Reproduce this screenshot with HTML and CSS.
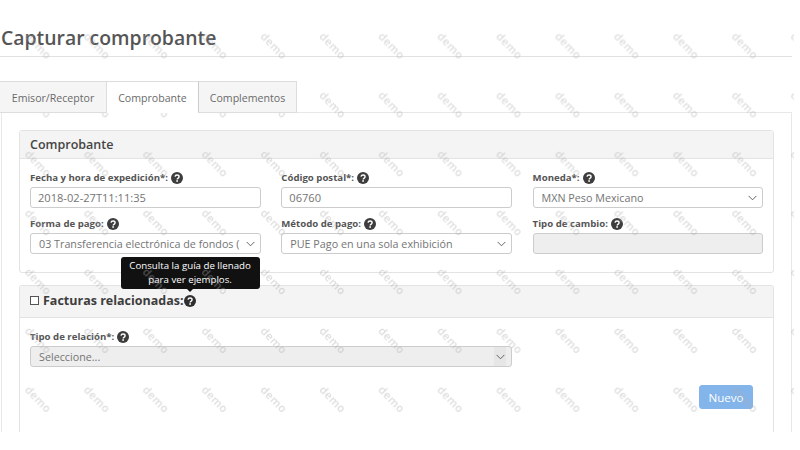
FILE: index.html
```html
<!DOCTYPE html>
<html lang="es">
<head>
<meta charset="utf-8">
<title>Capturar comprobante</title>
<link rel="stylesheet" href="styles.css">
</head>
<body>
<svg width="0" height="0" class="defs">
  <symbol id="q" viewBox="0 0 24 24">
    <circle cx="12" cy="12" r="12"/>
    <path d="M8 9.4C8.3 7.2 10 6 12.1 6c2.300 0 4 1.400 4 3.400 0 1.700-1 2.500-2.200 3.300-.9.600-1.400 1.100-1.400 2.100" fill="none" stroke="#fff" stroke-width="2.800"/>
    <rect x="10.600" y="16.400" width="3.200" height="3.200" fill="#fff"/>
  </symbol>
  <symbol id="chev" viewBox="0 0 10 6">
    <path d="M.7.7 5 5 9.300.7" fill="none" stroke="#555" stroke-width="1"/>
  </symbol>
</svg>
<main class="page">
  <h1 class="title">Capturar comprobante</h1>
  <nav class="tabs">
    <a class="tab tab-a">Emisor/Receptor</a>
    <a class="tab tab-active">Comprobante</a>
    <a class="tab tab-c">Complementos</a>
  </nav>
  <div class="pane">
    <section class="panel panel-one">
      <h2 class="panel-head">Comprobante</h2>
      <div class="grid">
        <div class="field">
          <label class="label">Fecha y hora de expedición*: <svg class="q"><use href="#q"/></svg></label>
          <div class="control num">2018-02-27T11:11:35</div>
        </div>
        <div class="field">
          <label class="label">Código postal*: <svg class="q"><use href="#q"/></svg></label>
          <div class="control num">06760</div>
        </div>
        <div class="field">
          <label class="label">Moneda*: <svg class="q"><use href="#q"/></svg></label>
          <div class="control select"><span class="val">MXN Peso Mexicano</span><svg class="chev"><use href="#chev"/></svg></div>
        </div>
        <div class="field">
          <label class="label">Forma de pago: <svg class="q"><use href="#q"/></svg></label>
          <div class="control select"><span class="val">03 Transferencia electrónica de fondos (</span><svg class="chev"><use href="#chev"/></svg></div>
        </div>
        <div class="field">
          <label class="label">Método de pago: <svg class="q"><use href="#q"/></svg></label>
          <div class="control select"><span class="val">PUE Pago en una sola exhibición</span><svg class="chev"><use href="#chev"/></svg></div>
        </div>
        <div class="field">
          <label class="label">Tipo de cambio: <svg class="q"><use href="#q"/></svg></label>
          <div class="control disabled"></div>
        </div>
      </div>
    </section>
    <section class="panel panel-two">
      <h2 class="panel-head head-check">
        <span class="check"></span>
        <span class="head-text">Facturas relacionadas:</span>
        <span class="tip-anchor">
          <svg class="q q-big"><use href="#q"/></svg>
          <span class="tooltip">Consulta la guía de llenado<br>para ver ejemplos.</span>
        </span>
      </h2>
      <div class="rel">
        <div class="field rel-field">
          <label class="label">Tipo de relación*: <svg class="q"><use href="#q"/></svg></label>
          <div class="control select disabled"><span class="val">Seleccione...</span><span class="chev-box"><svg class="chev"><use href="#chev"/></svg></span></div>
        </div>
        <div class="actions"><button class="btn" type="button">Nuevo</button></div>
      </div>
    </section>
  </div>
</main>
<svg class="watermark" aria-hidden="true">
  <defs>
    <pattern id="wm" width="58.900" height="58.900" patternUnits="userSpaceOnUse" patternTransform="translate(7.500 16.500)">
      <text class="wm-text" x="30" y="30" text-anchor="middle" dominant-baseline="middle" transform="rotate(46 30 30)">demo</text>
    </pattern>
  </defs>
  <rect width="100%" height="100%" fill="url(#wm)"/>
</svg>
</body>
</html>
```
FILE: styles.css
```css
* { box-sizing: border-box; }
html, body { margin: 0; padding: 0; background: #fff; }
body {
  position: relative;
  width: 800px;
  height: 450px;
  overflow: hidden;
  font-family: "Open Sans", sans-serif;
  color: #555;
}
.defs { position: absolute; }
.page {
  width: 792px;
  height: 432px;
  overflow: hidden;
}
.title {
  margin: 0;
  height: 57px;
  padding: 24px 0 0 1px;
  font-size: 19.400px;
  line-height: 27px;
  font-weight: 600;
  color: #555;
  border-bottom: 1px solid #e1e1e1;
}
.tabs {
  display: flex;
  height: 56px;
  padding-top: 24px;
  margin-bottom: -1px;
  position: relative;
  z-index: 1;
}
.tab {
  display: block;
  height: 32px;
  padding-top: 8px;
  font-size: 10.600px;
  line-height: 16px;
  text-align: center;
  color: #6a6a6a;
  background: #f5f5f5;
  border: 1px solid #ddd;
}
.tab-a { width: 107px; border-left: 0; border-right: 1px solid #ddd; }
.tab-active { width: 91px; background: #fff; border-bottom-color: #fff; border-left: 0; border-right: 0; }
.tab-c { width: 99px; border-left: 1px solid #ccc; }
.pane {
  height: 320px;
  margin-left: 1px;
  border: 1px solid #e8e8e8;
  border-bottom: 0;
  padding: 17px 17px 0 17px;
}
.panel {
  width: 755px;
  border: 1px solid #e3e3e3;
  border-radius: 3px;
  background: #fff;
}
.panel-one { height: 143px; margin-bottom: 12px; }
.panel-two { height: 160px; border-bottom: 0; }
.panel-head {
  margin: 0;
  height: 28px;
  padding: 0 0 0 10px;
  font-size: 12.500px;
  line-height: 27px;
  font-weight: 600;
  color: #444;
  background: #f4f4f4;
  border-bottom: 1px solid #e3e3e3;
}
.grid {
  display: grid;
  grid-template-columns: repeat(3, 230.500px);
  column-gap: 20.800px;
  row-gap: 7px;
  padding: 10px 0 0 10px;
}
.field { display: flex; flex-direction: column; }
.label {
  display: flex;
  align-items: center;
  gap: 3px;
  height: 18px;
  font-size: 9.650px;
  line-height: 18px;
  font-weight: 700;
  color: #555;
  white-space: nowrap;
}
.q { width: 12px; height: 12px; fill: #3d3d3d; flex: none; }
.control {
  display: flex;
  align-items: center;
  height: 21px;
  padding: 0 7px;
  font-size: 10.750px;
  color: #747474;
  background: #fff;
  border: 1px solid #ccc;
  border-radius: 3px;
}
.num { font-size: 11.100px; }
.select { padding: 0 5px 0 8px; }
.val { flex: 1; min-width: 0; overflow: hidden; white-space: nowrap; }
.chev { width: 9px; height: 6px; flex: none; margin-left: 4px; }
.disabled { background: #eee; }
.head-check {
  display: flex;
  align-items: center;
  height: 32px;
  padding-bottom: 2px;
  font-size: 12.500px;
  font-weight: 700;
  color: #3d3d3d;
}
.check {
  width: 9px;
  height: 9px;
  margin-right: 4px;
  border: 1px solid #555;
  background: #fff;
}
.tip-anchor {
  position: relative;
  display: flex;
}
.q-big { width: 12px; height: 12px; fill: #2f2f2f; }
.tooltip {
  position: absolute;
  left: -63px;
  bottom: 18px;
  width: 139px;
  height: 32px;
  padding-top: 2px;
  font-size: 9.700px;
  line-height: 14px;
  font-weight: 400;
  text-align: center;
  color: #fff;
  background: #111;
  border-radius: 3px;
}
.tooltip::after {
  content: "";
  position: absolute;
  left: 66px;
  bottom: -3px;
  border-left: 3px solid transparent;
  border-right: 3px solid transparent;
  border-top: 3px solid #111;
}
.rel { padding: 10px 10px 0; }
.rel-field { width: 482px; }
.chev-box {
  display: flex;
  align-items: center;
  justify-content: center;
  width: 12px;
  height: 19px;
  background: #e6e6e6;
}
.chev-box .chev { margin-left: 0; }
.actions { display: flex; justify-content: flex-end; padding: 18px 10px 0 0; }
.btn {
  width: 54px;
  height: 24px;
  padding: 0;
  font: 400 11.600px "Open Sans", sans-serif;
  color: #fff;
  background: #83b4ea;
  border: 1px solid #83b4ea;
  border-radius: 3px;
}
.watermark {
  position: absolute;
  left: 0;
  top: 0;
  width: 794px;
  height: 432px;
  pointer-events: none;
}
.wm-text {
  font-family: "Open Sans", sans-serif;
  font-size: 11px;
  letter-spacing: 0.500px;
  font-weight: 600;
  fill: #aaa;
  fill-opacity: 0.400;
}
```
